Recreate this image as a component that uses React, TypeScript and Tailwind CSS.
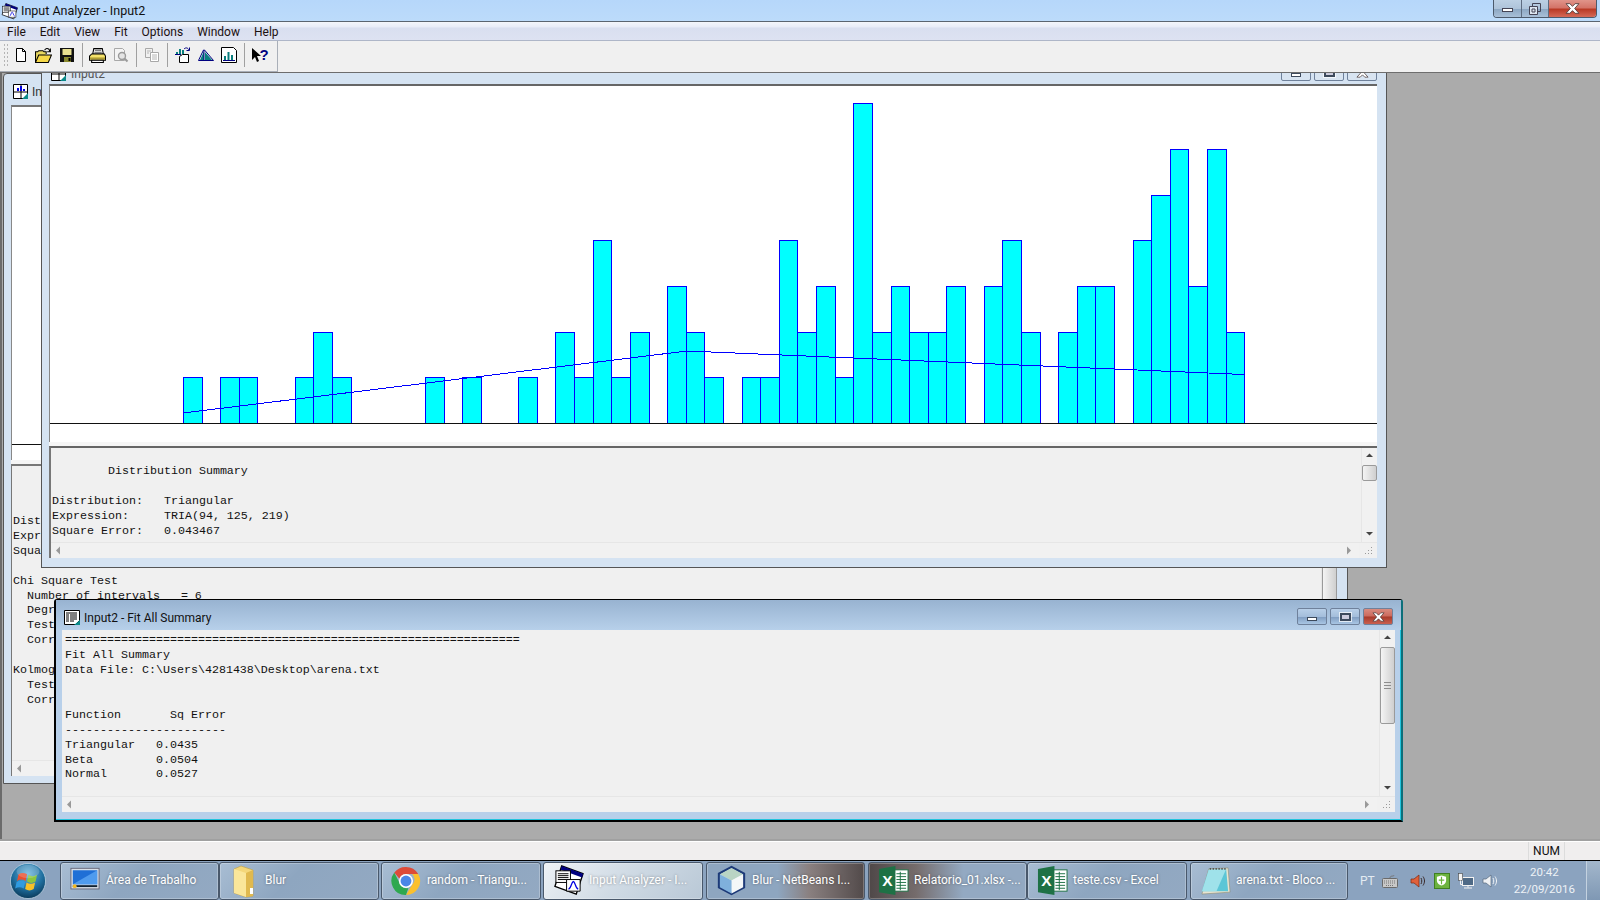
import React from 'react';

const ui = 'font-["Roboto","Liberation_Sans",sans-serif]';
const mono = 'font-["Liberation_Mono","Courier_New",monospace]';

// bar counts of the histogram, one per bin
const bins = [
  1, 0, 1, 1, 0, 0, 1, 2, 1, 0, 0, 0, 0, 1, 0, 1, 0, 0, 1, 0, 2, 1, 4, 1, 2, 0, 3, 2, 1,
  0, 1, 1, 4, 2, 3, 1, 7, 2, 3, 2, 2, 3, 0, 3, 4, 2, 0, 2, 3, 3, 0, 4, 5, 6, 3, 6, 2,
];
const binW = 18.62;
const unit = 45.7;

function Histogram() {
  return (
    <svg viewBox="50 86 1327 356" className="block w-[1327px] h-[356px]">
      {bins.map((n, i) => {
        if (n === 0) return null;
        const x0 = Math.round(183 + i * binW);
        const x1 = Math.round(183 + (i + 1) * binW);
        const top = Math.round(423 - n * unit);
        return (
          <rect
            key={i}
            x={x0 + 0.5}
            y={top + 0.5}
            width={x1 - x0}
            height={423 - top}
            fill="#00ffff"
            stroke="#0000ff"
            strokeWidth="1"
            shapeRendering="crispEdges"
          />
        );
      })}
      <line x1="50" y1="423.5" x2="1378" y2="423.5" stroke="#111" strokeWidth="1" />
      <polyline
        points="183,413 687,351 1244,374.5"
        fill="none"
        stroke="#0000ff"
        strokeWidth="1"
        shapeRendering="crispEdges"
      />
    </svg>
  );
}

function DocChartIcon() {
  return (
    <svg viewBox="0 0 16 16" className="w-4 h-4 shrink-0">
      <path d="M0.5 0.5h14v10l-4 4h-10z" fill="#fff" stroke="#000" />
      <path d="M0.5 8h14M8 0.5v14" stroke="#000" />
      <path d="M4 7V4h2v3zM7 7V2h2v5zM10 7V5h2v2z" fill="#0000e0" />
      <path d="M9 15l6-6v6z" fill="#0a8a8a" />
    </svg>
  );
}

function NotesIcon() {
  return (
    <svg viewBox="0 0 16 16" className="w-4 h-4 shrink-0">
      <path d="M0.5 0.5h15v10l-4 4h-11z" fill="#fff" stroke="#000" />
      <path d="M2 3h11M2 5h3M6 5h7M2 7h3M6 7h7M2 9h3M6 9h7M2 11h3M6 11h4" stroke="#000" />
      <path d="M10 15l6-5v5z" fill="#0a8a8a" />
    </svg>
  );
}

function AnalyzerIcon({ size }: { size: string }) {
  return (
    <svg viewBox="0 0 32 32" className={size}>
      <path d="M9 1l22 8-7 21L2 22z" fill="#fff" stroke="#000" strokeWidth="1.4" />
      <path d="M9 1l22 8-1 4L8 5z" fill="#000080" />
      <rect x="3" y="6" width="15" height="12" fill="#fff" stroke="#000" />
      <path d="M5 9h11M5 11h11M5 13h11M5 15h11" stroke="#000" />
      <path d="M14 15h14v12H14z" fill="#fff" stroke="#000" />
      <path d="M16 25c3-1 3-8 5-8s2 7 5 8" fill="none" stroke="#0000e0" strokeWidth="1.4" />
    </svg>
  );
}

function CloseGlyph({ size }: { size: string }) {
  return (
    <svg viewBox="0 0 14 10" className={size}>
      <path
        d="M1 0.5h3.500L7 3l2.500-2.500H13L9 5l4 4.500H9.500L7 7 4.500 9.500H1L5 5z"
        fill="#fff"
        stroke="#4a3a3a"
        strokeWidth="0.8"
      />
    </svg>
  );
}

function ToolSlot({ children }: { children: React.ReactNode }) {
  return <div className="w-[23px] h-[24px] flex items-center justify-center">{children}</div>;
}

function ToolSep() {
  return (
    <div className="w-[8px] h-[24px] flex justify-center">
      <div className="w-px h-full bg-[#a0a0a0]" />
    </div>
  );
}

function Toolbar() {
  return (
    <div className="h-[32px] bg-[#f0f0f0] border-b border-[#6d6d6d] flex">
      <div className="w-[278px] h-[31px] border-r border-b border-[#a9afb8] flex items-center pl-[3px] pb-[2px] bg-[#f0f0f0]">
        <div className="w-[6px] h-[24px] bg-[radial-gradient(#b5b5b5_1px,transparent_1px)] bg-[length:3px_4px]" />
        <ToolSlot>
          <svg viewBox="0 0 16 16" className="w-4 h-4">
            <path d="M3.5 1.5h6l3 3v10h-9z" fill="#fff" stroke="#000" />
            <path d="M9.5 1.5v3h3" fill="none" stroke="#000" />
          </svg>
        </ToolSlot>
        <ToolSlot>
          <svg viewBox="0 0 16 16" className="w-[17px] h-[17px]">
            <path d="M0.5 14.5v-10h2l1-1h4l1 1h2v2" fill="#e8d860" stroke="#000" />
            <path d="M0.5 14.5l3-7h12l-3 7z" fill="#f5d848" stroke="#000" />
            <path d="M9 3c1-2 3-2 4-1l1 2M14.5 1.5v3h-3" fill="none" stroke="#000" />
          </svg>
        </ToolSlot>
        <ToolSlot>
          <svg viewBox="0 0 16 16" className="w-4 h-4">
            <path d="M1 1h14v14H1z" fill="#111" />
            <rect x="3.5" y="2" width="9" height="6" fill="#e8e090" />
            <rect x="5" y="10" width="7" height="5" fill="#8a8a30" />
            <rect x="9.5" y="11" width="2" height="3" fill="#000" />
          </svg>
        </ToolSlot>
        <ToolSep />
        <ToolSlot>
          <svg viewBox="0 0 16 16" className="w-[17px] h-[17px]">
            <path d="M4.5 1.5h8l1 5h-10z" fill="#fff" stroke="#000" />
            <path d="M5.5 3h6M5 5h7" stroke="#555" />
            <path d="M0.5 8.5l2-2h12l1 2v4h-15z" fill="#f5e26a" stroke="#000" />
            <path d="M1 10.5h14" stroke="#8c7d1c" />
            <path d="M2.5 12.5h11v2h-11z" fill="#fff" stroke="#000" />
          </svg>
        </ToolSlot>
        <ToolSlot>
          <svg viewBox="0 0 16 16" className="w-4 h-4">
            <path d="M1.5 1.5h8l2 2v10h-10z" fill="#f4f4f4" stroke="#a8a8a8" />
            <circle cx="9" cy="9" r="3.5" fill="#e4e4e4" stroke="#9a9a9a" strokeWidth="1.4" />
            <path d="M11.5 11.5l3 3" stroke="#9a9a9a" strokeWidth="2" />
          </svg>
        </ToolSlot>
        <ToolSep />
        <ToolSlot>
          <svg viewBox="0 0 16 16" className="w-4 h-4">
            <path d="M1.5 1.5h7v9h-7z" fill="#f0f0f0" stroke="#a8a8a8" />
            <path d="M6.5 5.5h8v9h-8z" fill="#fff" stroke="#a8a8a8" />
            <path d="M8 8h5M8 10h5M8 12h5M3 4h4M3 6h2" stroke="#b4b4b4" />
          </svg>
        </ToolSlot>
        <ToolSep />
        <ToolSlot>
          <svg viewBox="0 0 16 16" className="w-4 h-4">
            <path d="M7.5 7.5h6v8h-9v-6z" fill="#fff" stroke="#000" />
            <path d="M1 7V5h2v2zM4 7V2h2v5zM7 7V3h2v4z" fill="#0a7f7f" />
            <path d="M0 7.5h6" stroke="#000080" />
            <path d="M9 2c2-2 4-1 5 1M14.5 0.5v3h-3" fill="none" stroke="#000080" />
          </svg>
        </ToolSlot>
        <ToolSlot>
          <svg viewBox="0 0 16 16" className="w-4 h-4">
            <path d="M1 13.5L6 3l8.5 10.5z" fill="#fff" />
            <path d="M2 13L6 4v9zM7 13V5l7 8z" fill="#0a7f7f" />
            <path d="M0.5 13.5L5.5 3l1 0 9 10.5z" fill="none" stroke="#000080" />
            <path d="M6 3v10.5" stroke="#000080" />
          </svg>
        </ToolSlot>
        <ToolSlot>
          <svg viewBox="0 0 16 16" className="w-4 h-4">
            <path d="M0.5 0.5h12l3 3v12h-15z" fill="#fff" stroke="#000" />
            <path d="M3 13V9h2v4zM6.5 13V5h2v8zM10 13V8h2v5z" fill="#0a7f7f" />
            <path d="M2 13.5h12" stroke="#000080" />
          </svg>
        </ToolSlot>
        <ToolSep />
        <ToolSlot>
          <svg viewBox="0 0 18 16" className="w-[18px] h-4">
            <path d="M1 1v12l3-3 2 5 2-1-2-5h4z" fill="#000" />
            <text x="8.5" y="13" fontSize="15" fontWeight="700" fill="#000080" fontFamily="Liberation Sans">?</text>
          </svg>
        </ToolSlot>
      </div>
    </div>
  );
}

function Arrow({ dir }: { dir: 'up' | 'down' | 'left' | 'right' }) {
  const d = { up: 'M1 5L4.5 1.5 8 5z', down: 'M1 1h7L4.5 4.5z', left: 'M5 0.5v8L1 4.5z', right: 'M1 0.5v8l4-4z' }[dir];
  return (
    <svg viewBox="0 0 9 9" className="w-[9px] h-[9px] block">
      <path d={d} fill={dir === 'up' || dir === 'down' ? '#444' : '#999'} />
    </svg>
  );
}

function Grip() {
  return (
    <svg viewBox="0 0 9 9" className="w-[9px] h-[9px] block">
      <path d="M7 1h1v1H7zM7 4h1v1H7zM7 7h1v1H7zM4 4h1v1H4zM4 7h1v1H4zM1 7h1v1H1z" fill="#9a9a9a" />
    </svg>
  );
}

// text pane with classic scroll bars, used by all three child windows
function TextPane({
  text,
  thumb,
  grip,
  className,
  preClass,
}: {
  text: string;
  thumb: string;
  grip?: boolean;
  className: string;
  preClass?: string;
}) {
  return (
    <div className={`flex flex-col bg-[#f0f0f0] ${className}`}>
      <div className="flex-1 min-h-0 flex">
        <pre className={`${mono} flex-1 min-w-0 overflow-hidden text-[11.67px] leading-[14.93px] text-[#111] ${preClass ?? ''}`}>{text}</pre>
        <div className="w-[16px] flex flex-col items-center bg-[#f1f1f1] border-l border-[#e6e6e6] pt-[4px] pb-[2px] overflow-hidden">
          <Arrow dir="up" />
          <div className={`w-[15px] shrink-0 border border-[#9a9a9a] rounded-[2px] bg-[linear-gradient(to_right,#f4f4f4,#cfcfcf)] flex items-center justify-center ${thumb}`}>
            {grip && <div className="w-[7px] h-[7px] border-y border-[#8d8d8d] bg-[linear-gradient(#0000_2px,#8d8d8d_2px,#8d8d8d_3px,#0000_3px)]" />}
          </div>
          <div className="flex-1" />
          <Arrow dir="down" />
        </div>
      </div>
      <div className="h-[16px] flex shrink-0 border-t border-[#e6e6e6]">
        <div className="flex-1 flex items-center justify-between px-[4px] bg-[#f1f1f1]">
          <Arrow dir="left" />
          <Arrow dir="right" />
        </div>
        <div className="w-[18px] flex items-center justify-center bg-[#f0f0f0]">
          <Grip />
        </div>
      </div>
    </div>
  );
}

function ChildButtons({ active }: { active?: boolean }) {
  const box = 'w-[30px] h-[17px] rounded-[2px] border border-[#6f819b] flex items-center justify-center';
  const idle = active
    ? 'bg-[linear-gradient(#b8cfe8_0%,#a4bedb_50%,#7f9cc0_52%,#a9c6e4_100%)]'
    : 'bg-[#d8e4f1]';
  return (
    <div className="flex gap-[3px]">
      <div className={`${box} ${idle}`}>
        <div className="w-[10px] h-[4px] bg-white border border-[#3d4a5c] mt-[4px]" />
      </div>
      <div className={`${box} ${idle}`}>
        <div className="w-[11px] h-[8px] bg-[#ccd] border-2 border-[#3d4a5c] outline outline-white/70" />
      </div>
      <div
        className={`${box} ${
          active ? 'bg-[linear-gradient(#d98b7f_0%,#cc6a5d_48%,#a83a2a_52%,#c9604f_100%)] border-[#5c2a2a]' : idle
        }`}
      >
        <CloseGlyph size="w-[13px] h-[10px]" />
      </div>
    </div>
  );
}

const backText = `


Distribution:   Triangular
Expression:     TRIA(94, 125, 219)
Square Error:   0.043467

Chi Square Test
  Number of intervals   = 6
  Degrees of freedom    = 3
  Test Statistic        = 15.2
  Corresponding p-value = 0.00196

Kolmogorov-Smirnov Test
  Test Statistic        = 0.181
  Corresponding p-value = 0.0335`;

const frontText = `
        Distribution Summary

Distribution:   Triangular
Expression:     TRIA(94, 125, 219)
Square Error:   0.043467`;

const fitText = `=================================================================
Fit All Summary
Data File: C:\\Users\\4281438\\Desktop\\arena.txt


Function       Sq Error
-----------------------
Triangular   0.0435
Beta         0.0504
Normal       0.0527`;

function Workspace() {
  return (
    <div className="flex-1 relative overflow-hidden bg-[#ababab] border-l-2 border-[#6b6b6b]">
      {/* back window */}
      <div className="absolute left-[1px] top-0 w-[1345px] h-[711px] bg-[#d5e3f2] border border-[#555] rounded-t-[4px] flex flex-col pl-[7px] pr-[10px] pb-[7px]">
        <div className={`h-[31px] shrink-0 flex items-center gap-[3px] pl-[2px] pt-[4px] text-[12px] text-[#333] ${ui}`}>
          <DocChartIcon />
          <span>Input2 - Histogram</span>
        </div>
        <div className="h-[355px] shrink-0 bg-white border-t-2 border-[#777] border-l border-l-[#888] flex flex-col">
          <div className="h-[338px] border-b border-[#111]" />
        </div>
        <div className="h-[4px] shrink-0 bg-[#f5f5f5]" />
        <TextPane
          text={backText}
          thumb="h-[300px] mt-[4px]"
          preClass="pl-[1px] pt-[3px]"
          className="flex-1 min-h-0 border-t-2 border-l border-[#777]"
        />
      </div>

      {/* histogram window */}
      <div className="absolute left-[39px] top-[-22px] w-[1346px] h-[517px] bg-[#d5e3f2] border border-[#555] flex flex-col pl-[7px] pr-[9px] pb-[9px]">
        <div className={`h-[32px] shrink-0 flex items-end justify-between pb-[3px] text-[12px] text-[#555] ${ui}`}>
          <div className="flex items-center gap-[4px] pl-[2px] mb-[-2px]">
            <DocChartIcon />
            <span>Input2</span>
          </div>
          <ChildButtons />
        </div>
        <div className="h-[358px] shrink-0 bg-white border-t-2 border-[#666] border-l border-l-[#888] overflow-hidden">
          <Histogram />
        </div>
        <div className="h-[4px] shrink-0 bg-[#f6f6f6]" />
        <TextPane
          text={frontText}
          thumb="h-[16px] mt-[4px]"
          preClass="pl-[1px] pt-[1px]"
          className="flex-1 min-h-0 border-t-2 border-[#666] border-l-2 border-l-[#777]"
        />
      </div>

      {/* fit all summary window */}
      <div className="absolute left-[52px] top-[526px] w-[1349px] h-[223px] border-2 border-black border-t border-r-[#0c6f7a] bg-[#b8d0ea] rounded-t-[3px] flex flex-col px-[6px] pb-[8px] shadow-[inset_0_-1px_0_#22c4dd,inset_-1px_0_0_#22c4dd]">
        <div className="h-[30px] shrink-0 -mx-[6px] px-[8px] pt-[2px] flex items-center justify-between bg-[linear-gradient(#98b3d1,#b7d0ea)]">
          <div className={`flex items-center gap-[4px] pt-[3px] text-[12px] text-[#111] ${ui}`}>
            <NotesIcon />
            <span>Input2 - Fit All Summary</span>
          </div>
          <div className="pt-[1px]">
            <ChildButtons active />
          </div>
        </div>
        <TextPane
          text={fitText}
          thumb="h-[77px] mt-[4px]"
          grip
          preClass="pl-[3px] pt-[3px]"
          className="flex-1 min-h-0"
        />
      </div>
    </div>
  );
}

function TaskButton({
  label,
  icon,
  bg,
  width,
}: {
  label: string;
  icon: React.ReactNode;
  bg: string;
  width: string;
}) {
  return (
    <div
      className={`${width} h-[38px] shrink-0 flex items-center gap-[5px] pl-[8px] rounded-[3px] border border-[#49586b] shadow-[inset_0_0_0_1px_#ffffff40] text-[12px] text-white whitespace-nowrap overflow-hidden ${ui} ${bg}`}
    >
      <div className="w-[32px] h-[32px] shrink-0 flex items-center justify-center">{icon}</div>
      <span className="-mt-[2px] [text-shadow:0_0_3px_#0006]">{label}</span>
    </div>
  );
}

function ExcelIcon() {
  return (
    <svg viewBox="0 0 32 32" className="w-[31px] h-[31px]">
      <rect x="16" y="5" width="15" height="22" fill="#fff" stroke="#1e7145" />
      <path d="M19 9h10M19 12h10M19 15h10M19 18h10M19 21h10M19 24h10M23 7v19" stroke="#1e7145" />
      <path d="M1 4l17-3v30L1 28z" fill="#1e7145" />
      <text x="4.5" y="22" fontSize="16" fontWeight="700" fill="#fff" fontFamily="Liberation Sans">X</text>
    </svg>
  );
}

const plainBtn = 'bg-[linear-gradient(135deg,#a8bdd3,#8ea6c0_45%,#93a9c2)]';

function Taskbar() {
  return (
    <div className="h-[40px] shrink-0 bg-[#8ba3bf] border-t border-black flex items-center relative">
      {/* start orb */}
      <div className="w-[60px] h-full flex items-center justify-center pr-[5px] shrink-0">
        <svg viewBox="0 0 40 40" className="w-[38px] h-[38px]">
          <defs>
            <radialGradient id="orb" cx="50%" cy="30%" r="70%">
              <stop offset="0" stopColor="#6bb5dd" />
              <stop offset="0.6" stopColor="#1f6f9f" />
              <stop offset="1" stopColor="#0b3a5a" />
            </radialGradient>
          </defs>
          <circle cx="20" cy="20" r="18.5" fill="url(#orb)" stroke="#cfe3ef" strokeOpacity="0.7" />
          <path d="M10 13c3-2 6-2 9 0l-1.5 7c-3-2-6-2-9 0z" fill="#e8502f" />
          <path d="M20.5 13.5c3 2 6 2 9 0L28 20.5c-3 2-6 2-9 0z" fill="#8bc63f" />
          <path d="M8 21c3-2 6-2 9 0l-1.5 7c-3-2-6-2-9 0z" fill="#2f9be0" />
          <path d="M18.5 21.5c3 2 6 2 9 0l-1.5 7c-3 2-6 2-9 0z" fill="#f7c127" />
          <ellipse cx="20" cy="10" rx="12" ry="7" fill="#fff" fillOpacity="0.18" />
        </svg>
      </div>
      <div className="flex">
        <TaskButton
          label="Área de Trabalho"
          width="w-[159px]"
          bg={plainBtn}
          icon={
            <svg viewBox="0 0 32 28" className="w-[30px] h-[27px]">
              <rect x="1" y="1" width="30" height="22" fill="#d8dfe8" stroke="#667" />
              <path d="M3 3h26v15H3z" fill="#1f6fd6" />
              <path d="M3 18L29 3v15z" fill="#4f9bee" />
              <rect x="3" y="19" width="26" height="2" fill="#123" />
              <circle cx="5" cy="20" r="2" fill="#f5b81f" />
            </svg>
          }
        />
        <TaskButton
          label="Blur"
          width="w-[160px]"
          bg={plainBtn}
          icon={
            <svg viewBox="0 0 24 34" className="w-[24px] h-[34px]">
              <path d="M2 5l7-3 12 4v26l-7 1-12-4z" fill="#f4d77a" stroke="#c0a040" strokeWidth="0.6" />
              <path d="M2 5l12 4v24L2 29z" fill="#fae69a" />
              <path d="M14 9l7-3v26l-7 1z" fill="#e0b94f" />
              <rect x="18" y="24" width="3" height="6" fill="#fff" />
            </svg>
          }
        />
      </div>
      <div className="ml-[2px]">
        <TaskButton
          label="random - Triangu..."
          width="w-[160px]"
          bg={plainBtn}
          icon={
            <svg viewBox="0 0 32 32" className="w-[30px] h-[30px]">
              <path d="M16 1a15 15 0 0 1 13 7.5H16a7.5 7.5 0 0 0-7 5L3.5 7A15 15 0 0 1 16 1z" fill="#dd4b39" />
              <path d="M29 8.500a15 15 0 0 1-13 22.500l6.500-11a7.500 7.500 0 0 0 0-11.500z" fill="#fbc02d" />
              <path d="M16 31A15 15 0 0 1 3.500 7L9.500 19a7.500 7.500 0 0 0 9 4.500z" fill="#2ea84f" />
              <circle cx="16" cy="16" r="7.500" fill="#fff" />
              <circle cx="16" cy="16" r="5.800" fill="#4a86e8" />
            </svg>
          }
        />
      </div>
      <div className="ml-[2px]">
        <TaskButton
          label="Input Analyzer - I..."
          width="w-[160px]"
          bg="bg-[linear-gradient(135deg,#eef2f6,#cfdae4_50%,#b9c8d6)]"
          icon={<AnalyzerIcon size="w-[31px] h-[31px]" />}
        />
      </div>
      <div className="ml-[3px]">
        <TaskButton
          label="Blur - NetBeans I..."
          width="w-[159px]"
          bg="bg-[linear-gradient(to_right,#8ea6c0_0%,#8ea6c0_45%,#8a8080_65%,#524a4a_100%)]"
          icon={
            <svg viewBox="0 0 32 32" className="w-[31px] h-[31px]">
              <path d="M16 2l13 7v14l-13 7-13-7V9z" fill="#dfeaf2" stroke="#1d3a78" strokeWidth="2.200" />
              <path d="M16 3l12 6.500L16 16 4 9.500z" fill="#b9d4c4" />
              <path d="M16 16l12-6.500V23l-12 6.500z" fill="#f4f7f8" />
              <path d="M4 9.500L16 16v13.500L4 23z" fill="#7fb0dc" />
            </svg>
          }
        />
      </div>
      <div className="ml-[3px] flex">
        <TaskButton
          label="Relatorio_01.xlsx -..."
          width="w-[159px]"
          bg="bg-[linear-gradient(to_right,#4f4848_0%,#756c6c_30%,#93a9c2_60%)]"
          icon={<ExcelIcon />}
        />
        <TaskButton label="teste.csv - Excel" width="w-[160px]" bg={plainBtn} icon={<ExcelIcon />} />
      </div>
      <div className="ml-[3px]">
        <TaskButton
          label="arena.txt - Bloco ..."
          width="w-[158px]"
          bg={plainBtn}
          icon={
            <svg viewBox="0 0 32 32" className="w-[31px] h-[31px]">
              <path d="M9 4l20-1 2 25-29 2z" fill="#e8e4d0" stroke="#8a8a70" strokeWidth="0.6" />
              <path d="M9 5l18-1 2 23H2z" fill="#5cc6d6" />
              <path d="M9 5l18-1-10 23H2z" fill="#9fe2ea" />
              <path d="M10 4h18" stroke="#555" strokeDasharray="1.500 1.500" strokeWidth="2" />
            </svg>
          }
        />
      </div>
      {/* tray */}
      <div className={`flex-1 h-full flex items-center text-white ${ui}`}>
        <span className="ml-[12px] text-[12px] text-[#e4ebf2]">PT</span>
        <svg viewBox="0 0 16 14" className="w-[16px] h-[14px] ml-[7px]">
          <rect x="0.500" y="4.500" width="15" height="9" rx="1" fill="#c8c8c8" stroke="#6a6a6a" />
          <path d="M2 7h12M2 9h12M4 11.500h8" stroke="#777" strokeDasharray="1 1" />
          <path d="M8 4c0-3 4-1 4-3" fill="none" stroke="#777" />
        </svg>
        <svg viewBox="0 0 16 16" className="w-[16px] h-[16px] ml-[12px]">
          <path d="M1 6h3l5-4v12l-5-4H1z" fill="#e0603a" stroke="#7a2a12" strokeWidth="0.700" />
          <path d="M11 5c1 2 1 4 0 6M13 3.500c2 3 2 6 0 9" fill="none" stroke="#3a2a2a" />
        </svg>
        <div className="w-[16px] h-[16px] ml-[8px] bg-[#6cb33f] border border-[#3f7f22] flex items-center justify-center">
          <svg viewBox="0 0 12 12" className="w-[11px] h-[11px]">
            <path d="M6 0.500l5 1.500v4c0 3-3 5-5 5.500C4 11 1 9 1 6V2z" fill="#fff" />
            <path d="M6 2v8M3 5.500h6" stroke="#6cb33f" strokeWidth="1.300" />
          </svg>
        </div>
        <svg viewBox="0 0 16 16" className="w-[16px] h-[16px] ml-[8px]">
          <rect x="4.500" y="4.500" width="11" height="8" fill="#4f6a86" stroke="#f2f2f2" />
          <path d="M10 12.500v2M6 15h8" stroke="#f2f2f2" />
          <rect x="0.500" y="0.500" width="4" height="7" fill="#f2f2f2" stroke="#444" strokeWidth="0.600" />
          <path d="M2.500 7.500v4h2" stroke="#f2f2f2" fill="none" />
        </svg>
        <svg viewBox="0 0 16 16" className="w-[16px] h-[16px] ml-[8px]">
          <path d="M1 6h3l5-4v12l-5-4H1z" fill="#eef1f4" stroke="#56687c" strokeWidth="0.700" />
          <path d="M11 5c1 2 1 4 0 6M13 3.500c2 3 2 6 0 9" fill="none" stroke="#f0f3f6" />
        </svg>
        <div className="flex-1 flex flex-col items-center text-[11.5px] leading-[17px] text-[#eef2f6] pl-[5px]">
          <span>20:42</span>
          <span>22/09/2016</span>
        </div>
        <div className="w-[14px] h-full shrink-0 border-l border-[#c4d2e0] bg-[linear-gradient(#a3b7cc,#7f98b4)]" />
      </div>
    </div>
  );
}

export default function App() {
  return (
    <div className="w-[1600px] h-[900px] flex flex-col overflow-hidden bg-[#f0f0f0]">
      {/* title bar */}
      <div className="h-[22px] shrink-0 bg-[linear-gradient(to_bottom,#b6d7fa,#bcdbfa)] border-b border-[#5b6570] flex items-start justify-between">
        <div className={`flex items-center h-[21px] pt-[1px] text-[12.5px] text-[#111] ${ui}`}>
          <AnalyzerIcon size="w-[17px] h-[17px] ml-[1px]" />
          <span className="ml-[3px]">Input Analyzer - Input2</span>
        </div>
        <div className="flex mr-[3px] h-[18px] rounded-b-[4px] border border-t-0 border-[#4c5a6c] overflow-hidden">
          <div className="w-[28px] flex items-center justify-center bg-[linear-gradient(#bcd0e4_0%,#aec4da_50%,#8ba6c2_52%,#a9c0d8_100%)] border-r border-[#5d6c80]">
            <div className="w-[11px] h-[4px] bg-white border border-[#445] mt-[3px]" />
          </div>
          <div className="w-[27px] flex items-center justify-center bg-[linear-gradient(#bcd0e4_0%,#aec4da_50%,#8ba6c2_52%,#a9c0d8_100%)] border-r border-[#5d6c80]">
            <svg viewBox="0 0 12 12" className="w-[12px] h-[12px]">
              <path d="M3.500 0.500h8v8h-8z" fill="none" stroke="#445" />
              <path d="M0.500 3.500h8v8h-8z" fill="#dde6f0" stroke="#445" />
              <path d="M3 6h3v3H3z" fill="none" stroke="#445" />
            </svg>
          </div>
          <div className="w-[47px] flex items-center justify-center bg-[linear-gradient(#e0948a_0%,#d47468_45%,#b93a26_55%,#d56a58_100%)]">
            <CloseGlyph size="w-[15px] h-[11px]" />
          </div>
        </div>
      </div>

      {/* menu */}
      <div className="h-[19px] shrink-0 bg-[linear-gradient(#f4f6fb_0%,#e9edf8_25%,#d9dff0_35%,#dde2f2_100%)] border-b border-[#aeb6c8] flex items-center">
        <div className={`flex gap-[14px] pl-[7px] pt-[2px] text-[12px] text-[#1c1010] ${ui}`}>
          {['File', 'Edit', 'View', 'Fit', 'Options', 'Window', 'Help'].map((m) => (
            <span key={m}>{m}</span>
          ))}
        </div>
      </div>

      <Toolbar />
      <Workspace />

      {/* status bar */}
      <div className="h-[21px] shrink-0 border-t-2 border-[#a0a0a0] bg-[#f0eeee] shadow-[inset_0_1px_0_#fff] flex justify-end pt-[1px]">
        <div className={`w-[37px] mr-[35px] border-x border-[#dcdcdc] text-center text-[12px] leading-[18px] text-[#111] ${ui}`}>NUM</div>
      </div>

      <Taskbar />
    </div>
  );
}
